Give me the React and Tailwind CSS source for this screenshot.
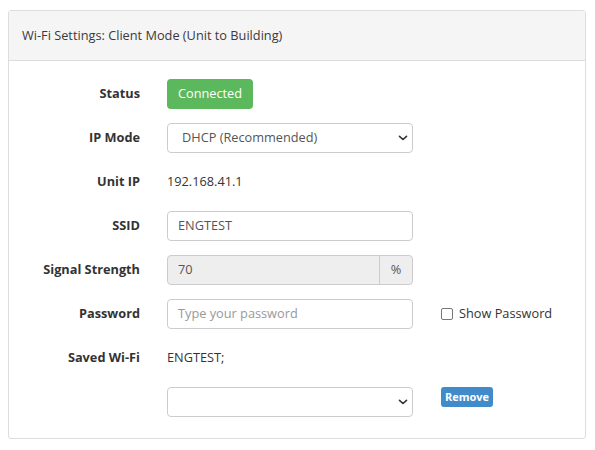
import React from "react";

const Chevron = () => (
  <svg width="10" height="7" viewBox="0 0 10 7" className="absolute right-[4px] top-1/2 -translate-y-1/2">
    <path d="M1.5 1.8 L5 5 L8.5 1.8" fill="none" stroke="#333" strokeWidth="1.6" strokeLinecap="round" strokeLinejoin="round" />
  </svg>
);

function Row({ label, children, extra, extraTop }) {
  return (
    <div className="flex items-center h-[30px]">
      <div className="w-[131px] text-right font-bold text-[12.75px] text-[#333]">{label}</div>
      <div className="ml-[27px] w-[246px] h-[30px] flex items-center">{children}</div>
      {extra && (
        <div className={extraTop ? "ml-[28px] flex self-start" : "ml-[28px] flex items-center"}>{extra}</div>
      )}
    </div>
  );
}

export default function App() {
  return (
    <div className="w-[595px] h-[450px] bg-white pt-[10px] pl-[8px]" style={{ fontFamily: '"Open Sans", sans-serif' }}>
      <div className="w-[578px] h-[429px] border border-[#ddd] rounded-[3px] bg-white">
        <div className="h-[50px] bg-[#f5f5f5] border-b border-[#ddd] flex items-center px-[13px] text-[12.75px] text-[#3a3a3a]">
          Wi-Fi Settings: Client Mode (Unit to Building)
        </div>
        <div className="pt-[18px] flex flex-col gap-[14px]">
          <Row label="Status">
            <div className="h-[30px] w-[86px] bg-[#5cb85c] rounded-[4px] text-white text-[12.75px] flex items-center justify-center">
              Connected
            </div>
          </Row>
          <Row label="IP Mode">
            <div className="relative w-full h-full border border-[#ccc] rounded-[4px] flex items-center pl-[14px] text-[12.75px] text-[#555]">
              DHCP (Recommended)
              <Chevron />
            </div>
          </Row>
          <Row label="Unit IP">
            <span className="text-[12.75px] text-[#333]">192.168.41.1</span>
          </Row>
          <Row label="SSID">
            <div className="w-full h-full border border-[#ccc] rounded-[4px] flex items-center pl-[10px] text-[12.75px] text-[#555]">
              ENGTEST
            </div>
          </Row>
          <Row label="Signal Strength">
            <div className="w-full h-full border border-[#ccc] rounded-[4px] flex bg-[#eee] text-[12.75px] text-[#555]">
              <div className="flex-1 flex items-center pl-[10px]">70</div>
              <div className="w-[33px] border-l border-[#ccc] flex items-center justify-center">%</div>
            </div>
          </Row>
          <Row
            label="Password"
            extra={
              <label className="flex items-center gap-[6px] text-[12.75px] text-[#333]">
                <span className="w-[12px] h-[12px] border border-[#777] rounded-[2px] bg-white" />
                Show Password
              </label>
            }
          >
            <div className="w-full h-full border border-[#ccc] rounded-[4px] flex items-center pl-[10px] text-[12.75px] text-[#999]">
              Type your password
            </div>
          </Row>
          <Row label="Saved Wi-Fi">
            <span className="text-[12.75px] text-[#333]">ENGTEST;</span>
          </Row>
          <Row
            label=""
            extraTop
            extra={
              <div className="h-[20px] w-[52px] bg-[#428bca] rounded-[3px] text-white text-[11px] font-bold flex items-center justify-center">
                Remove
              </div>
            }
          >
            <div className="relative w-full h-full border border-[#ccc] rounded-[4px]">
              <Chevron />
            </div>
          </Row>
        </div>
      </div>
    </div>
  );
}
